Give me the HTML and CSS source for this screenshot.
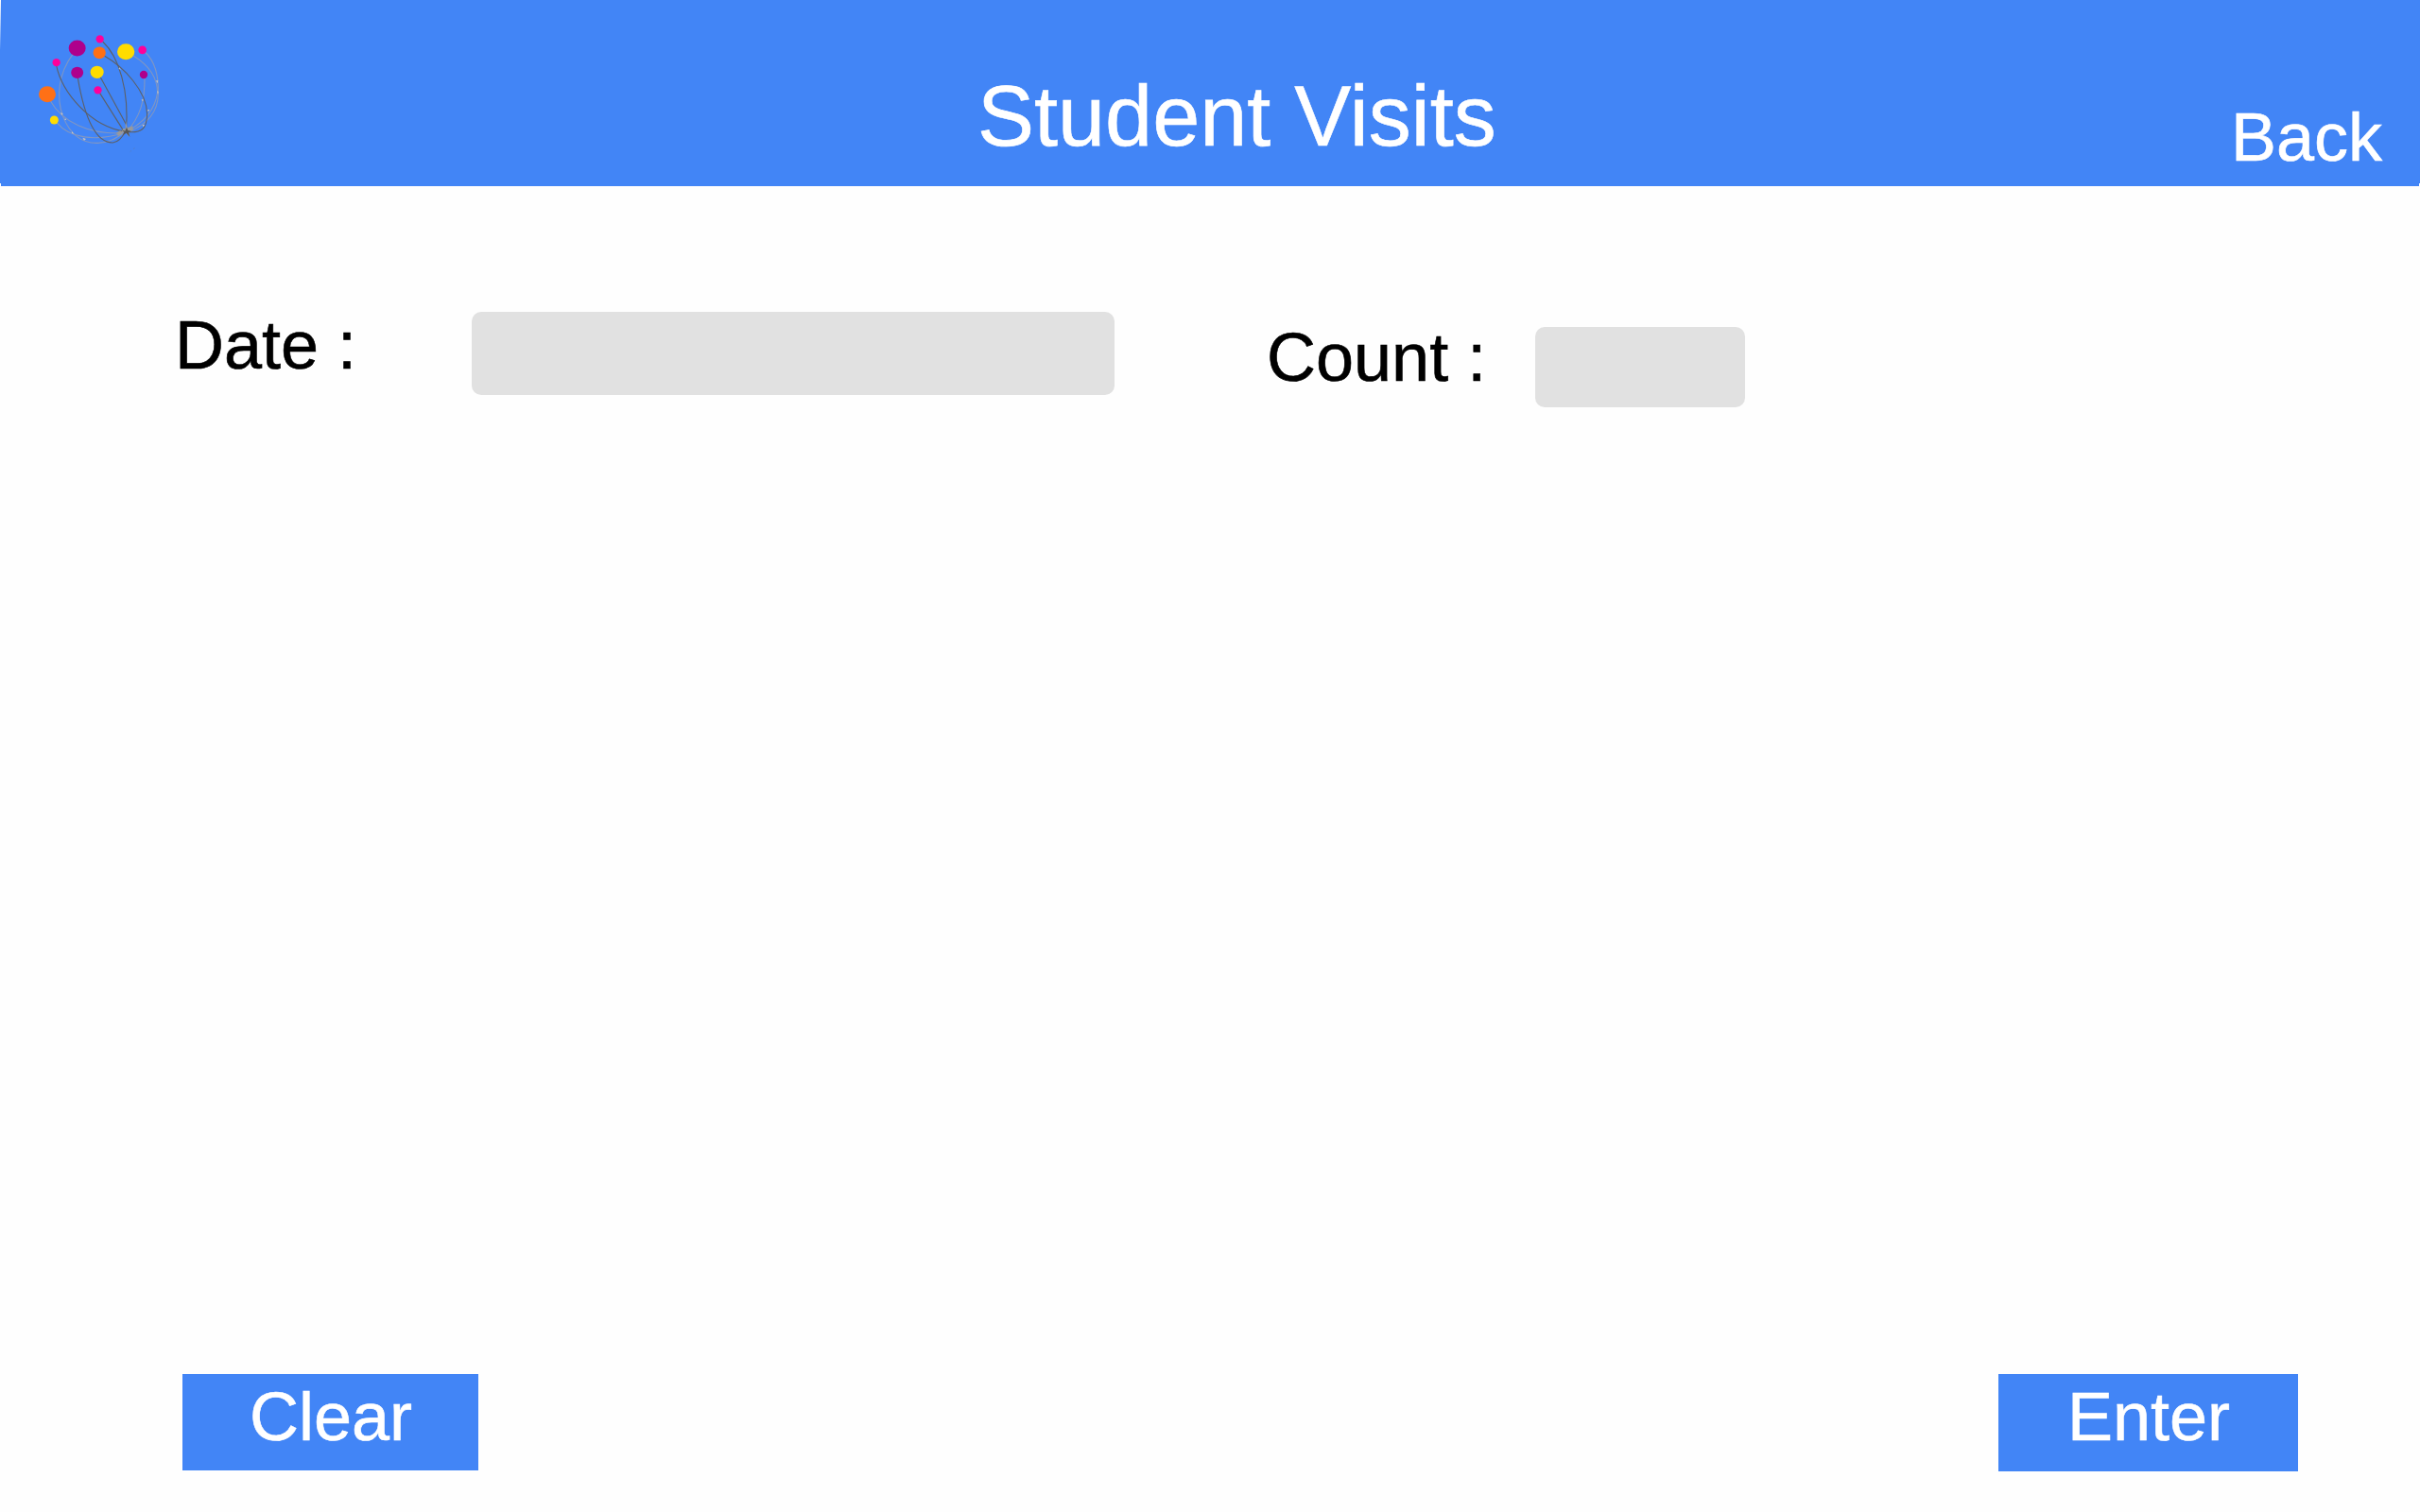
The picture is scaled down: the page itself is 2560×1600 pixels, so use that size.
FILE: index.html
```html
<!DOCTYPE html>
<html lang="en">
<head>
<meta charset="utf-8">
<title>Student Visits</title>
<link rel="stylesheet" href="styles.css">
</head>
<body>
<div class="page">
  <header class="header">
    <svg class="logo" viewBox="0 0 540 540" fill="none" aria-hidden="true">
      <g class="strand-light">
        <path d="M231 172C184 235 178 310 200 370C228 440 270 455 310 454C350 453 372 436 400 418"/>
        <path d="M160 320C198 388 282 426 385 423"/>
        <path d="M179 388C220 438 300 452 400 420"/>
        <path d="M424 178C480 212 499 256 500 293C492 350 457 386 405 417"/>
        <path d="M460 165C494 196 504 248 502 300C501 350 477 390 410 418"/>
        <path d="M459 247C460 320 445 373 400 420"/>
      </g>
      <g class="strand">
        <path d="M179 208C196 290 284 402 400 418"/>
        <path d="M247 248C261 330 290 454 358 453C378 451 388 437 397 418"/>
        <path d="M326 132C377 180 411 285 400 418"/>
        <path d="M332 178C391 212 466 288 467 362C466 410 449 424 400 418"/>
        <path d="M318 244L401 396"/>
        <path d="M317 296L394 418"/>
      </g>
      <path d="M367 423l14-8 5 2 4-8 8-1 1-24 5 22 18-6-1 8 4 5-14 2-3 3 3 18-10-13-10-3-6 6-13 8 3-8z" fill="#999"/>
      <path d="M386 412l11 4 5-12 4 10 10 2-8 5 4 14-11-13-11 8 4-11z" fill="#555"/>
      <g fill="#c8c5c1">
        <path d="M378 214l6 7-7-2zM192 358l8 2-4 6zM207 375l4 7-6-2zM228 417l7 8-7-2zM262 437l11 4-6 5zM495 256l7 0-3 9zM498 289l5 2-2 9zM449 315l7 2-4 5zM468 348l7 0-5 7zM452 396l8 1-6 6z"/>
      </g>
      <path d="M413 482l4-4M423 473l5-3" stroke="#777" stroke-width="1"/>
      <ellipse cx="245" cy="153" rx="27" ry="25.500" fill="#ae008c"/>
      <ellipse cx="399.500" cy="164" rx="27.500" ry="25.500" fill="#ffdc00"/>
      <ellipse cx="150" cy="299" rx="27" ry="25.500" fill="#ff7016"/>
      <ellipse cx="315.500" cy="167.500" rx="20" ry="19" fill="#ff7016"/>
      <ellipse cx="308" cy="229" rx="21" ry="20" fill="#ffdc00"/>
      <ellipse cx="245" cy="230.500" rx="19.500" ry="18.500" fill="#ae008c"/>
      <circle cx="317" cy="124" r="12.500" fill="#fe009b"/>
      <circle cx="452" cy="158.500" r="13" fill="#fe009b"/>
      <circle cx="179" cy="198.500" r="12.500" fill="#fe009b"/>
      <circle cx="310.500" cy="286" r="12.500" fill="#fe009b"/>
      <circle cx="456" cy="237" r="12.500" fill="#ae008c"/>
      <circle cx="172" cy="381" r="13.500" fill="#ffdc00"/>
    </svg>
    <h1 class="title">Student Visits</h1>
    <a class="back">Back</a>
  </header>
  <main class="form">
    <label class="label label-date" for="date">Date :</label>
    <input class="field field-date" id="date" type="text">
    <label class="label label-count" for="count">Count :</label>
    <input class="field field-count" id="count" type="text">
  </main>
  <footer class="actions">
    <button class="button clear">Clear</button>
    <button class="button enter">Enter</button>
  </footer>
</div>
</body>
</html>
```

FILE: styles.css
```css
* { box-sizing: border-box; }

body {
  margin: 0;
  background: #fefefe;
  font-family: "Liberation Sans", Arial, sans-serif;
  font-size: 72px;
  line-height: 72px;
  color: #000;
  -webkit-text-stroke: 0.6px currentColor;
}

.page {
  display: flex;
  flex-direction: column;
  width: 2560px;
  height: 1600px;
  overflow: hidden;
}

.header {
  display: grid;
  grid-template-columns: 1035px 1fr 200px;
  align-items: start;
  height: 197px;
  background:
    linear-gradient(#fefefe, #4285f6) 0 0 / 1px 53px no-repeat,
    linear-gradient(#fefefe, #fefefe) 0 194px / 1px 3px no-repeat,
    linear-gradient(#fefefe, #fefefe) 100% 194px / 1px 3px no-repeat,
    #4285f6;
  color: #fff;
}

.logo {
  width: 180px;
  height: 180px;
}

.strand { stroke: #5c6068; stroke-width: 3.3; }
.strand-light { stroke: #7f96c4; stroke-width: 3.3; }

.title {
  margin: 78px 0 0 -1px;
  font-size: 90px;
  line-height: 90px;
  font-weight: 400;
  white-space: nowrap;
}

.back { margin-top: 109px; }

.form {
  display: flex;
  align-items: flex-start;
  flex: 1;
  padding: 132px 0 0 185px;
}

.label { white-space: nowrap; }
.label-date { width: 314px; }
.label-count { width: 284px; margin: 13px 0 0 161px; }

.field {
  border: 0;
  border-radius: 10px;
  background: #e1e1e1;
  padding: 0 16px;
  font: inherit;
}

.field-date { width: 680px; height: 88px; margin-top: 1px; }
.field-count { width: 222px; height: 85px; margin-top: 17px; }

.actions {
  display: flex;
  justify-content: space-between;
  align-items: flex-start;
  height: 146px;
  padding: 0 129px 0 193px;
}

.button {
  display: flex;
  align-items: flex-start;
  border: 0;
  background: #4285f6;
  color: #fff;
  font: inherit;
}

.clear { width: 313px; height: 102px; padding: 9px 0 0 71px; }
.enter { width: 317px; height: 103px; padding: 9px 0 0 73px; }
```
